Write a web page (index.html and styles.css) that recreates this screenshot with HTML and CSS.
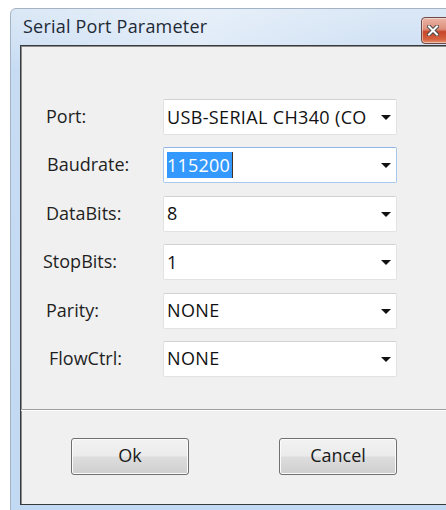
FILE: index.html
```html
<!DOCTYPE html>
<html>
<head>
<meta charset="utf-8">
<title>Serial Port Parameter</title>
<link rel="stylesheet" href="styles.css">
</head>
<body>
<div class="window">
  <div class="titlebar">
    <span class="title">Serial Port Parameter</span>
    <button class="close" type="button" aria-label="Close">
      <svg width="12" height="11" viewBox="0 0 12 11">
        <path d="M2 1.5 L10 9.5 M10 1.5 L2 9.5" stroke="#4a4a4a" stroke-width="4" stroke-linecap="square"/>
        <path d="M2 1.5 L10 9.5 M10 1.5 L2 9.5" stroke="#ffffff" stroke-width="2" stroke-linecap="square"/>
      </svg>
    </button>
  </div>
  <div class="client">
    <div class="form">
      <label class="label">Port:</label>
      <div class="combo"><span class="value">USB-SERIAL CH340 (COM3)</span><span class="arrow"></span></div>

      <label class="label shift-r1">Baudrate:</label>
      <div class="combo focused"><span class="value"><span class="selected">115200</span></span><span class="arrow"></span></div>

      <label class="label">DataBits:</label>
      <div class="combo"><span class="value">8</span><span class="arrow"></span></div>

      <label class="label shift-l">StopBits:</label>
      <div class="combo"><span class="value">1</span><span class="arrow"></span></div>

      <label class="label">Parity:</label>
      <div class="combo"><span class="value">NONE</span><span class="arrow"></span></div>

      <label class="label shift-r">FlowCtrl:</label>
      <div class="combo"><span class="value">NONE</span><span class="arrow"></span></div>
    </div>
    <div class="separator"></div>
    <div class="actions">
      <button class="btn btn-ok" type="button">Ok</button>
      <button class="btn btn-cancel" type="button">Cancel</button>
    </div>
  </div>
</div>
</body>
</html>
```

FILE: styles.css
```css
html, body {
  margin: 0;
  padding: 0;
  background: #ffffff;
  width: 446px;
  height: 510px;
  overflow: hidden;
}

body {
  padding-top: 8px;
  padding-left: 10px;
  box-sizing: border-box;
  font-family: "Open Sans", "Noto Sans", "Liberation Sans", sans-serif;
  font-size: 18px;
  color: #1a1a1a;
}

/* Aero-style window frame */
.window {
  width: 470px;
  height: 520px;
  box-sizing: border-box;
  border: 1px solid #a3b3c4;
  border-radius: 6px 0 0 0;
  background: linear-gradient(to bottom, #dbe8f6 0px, #d3e3f5 30px, #c7dcf3 60px, #c2d9f3 100%);
  padding: 0 9px 0 9px;
  display: flex;
  flex-direction: column;
}

.titlebar {
  height: 36px;
  display: flex;
  align-items: center;
  position: relative;
  background: linear-gradient(to right, rgba(255,255,255,0) 0%, rgba(255,255,255,0.35) 40%, rgba(255,255,255,0) 80%);
  margin: 0 -9px;
  padding: 0 9px;
}

.title {
  padding-left: 3px;
  padding-bottom: 2px;
  color: #1e2a36;
  line-height: 24px;
  letter-spacing: 0.2px;
  flex: 1;
}

.close {
  width: 44px;
  height: 27px;
  margin-top: 7px;
  margin-right: 5px;
  padding: 0 0 0 4px;
  border: 1px solid #6f4a44;
  border-radius: 4px;
  background: linear-gradient(to bottom, #eab5a7 0%, #dd8f7a 45%, #c6462b 55%, #d5623f 85%, #e59274 100%);
  box-shadow: inset 0 0 0 1px rgba(255, 255, 255, 0.45);
  display: flex;
  align-items: center;
  justify-content: flex-start;
}

.close svg {
  display: block;
  margin-left: 1px;
}

/* dialog body */
.client {
  height: 460px;
  box-sizing: border-box;
  border: 1px solid #3a3a3a;
  box-shadow: inset 1px 1px 0 #8c8c8c;
  background: #f0f0f0;
  display: flex;
  flex-direction: column;
}

.form {
  padding: 53px 0 0 25px;
  display: grid;
  grid-template-columns: 117px 234px;
  grid-auto-rows: 36px;
  row-gap: 12.4px;
  align-items: center;
}

.label {
  line-height: 24px;
  padding-bottom: 2px;
  color: #1f1f1f;
}

.shift-l { margin-left: -3px; }
.shift-r { margin-left: 3px; }
.shift-r1 { margin-left: 1px; }

.combo {
  height: 36px;
  box-sizing: border-box;
  background: #ffffff;
  border: 1px solid #e2e2e2;
  border-top-color: #d2d2d2;
  border-radius: 2px;
  display: flex;
  align-items: center;
  padding-left: 3px;
}

.combo.focused {
  border-color: #a8c9ec;
  border-top-color: #8db6e3;
}

/* the edit part clips long port names, like the native combo */
.value {
  width: 201px;
  overflow: hidden;
  white-space: nowrap;
  color: #111111;
  line-height: 26px;
  padding-bottom: 1px;
  letter-spacing: 0.35px;
}

.selected {
  display: inline-block;
  background: #3399ff;
  color: #ffffff;
  line-height: 26px;
  height: 26px;
  margin-left: -1px;
  padding: 0 2px 0 1px;
  letter-spacing: 0.2px;
  border-right: 1px solid #4a3020;
}

.arrow {
  margin-left: 13px;
  width: 0;
  height: 0;
  border-left: 5px solid transparent;
  border-right: 5px solid transparent;
  border-top: 5px solid #111111;
  margin-top: 1px;
}

.separator {
  margin-top: 32px;
  height: 1px;
  background: #a0a0a0;
  border-bottom: 1px solid #ffffff;
}

.actions {
  display: flex;
  padding: 27px 0 0 50px;
  gap: 90px;
}

.btn {
  height: 37px;
  box-sizing: border-box;
  border: 1px solid #707070;
  border-radius: 3px;
  background: linear-gradient(to bottom, #f2f2f2 0%, #ebebeb 48%, #dddddd 52%, #cfcfcf 100%);
  box-shadow: inset 0 0 0 1px #fbfbfb;
  font-family: inherit;
  font-size: 18px;
  color: #1a1a1a;
  padding: 0 0 2px 0;
  line-height: 24px;
}

.btn-ok { width: 118px; }
.btn-cancel { width: 118px; }
```
